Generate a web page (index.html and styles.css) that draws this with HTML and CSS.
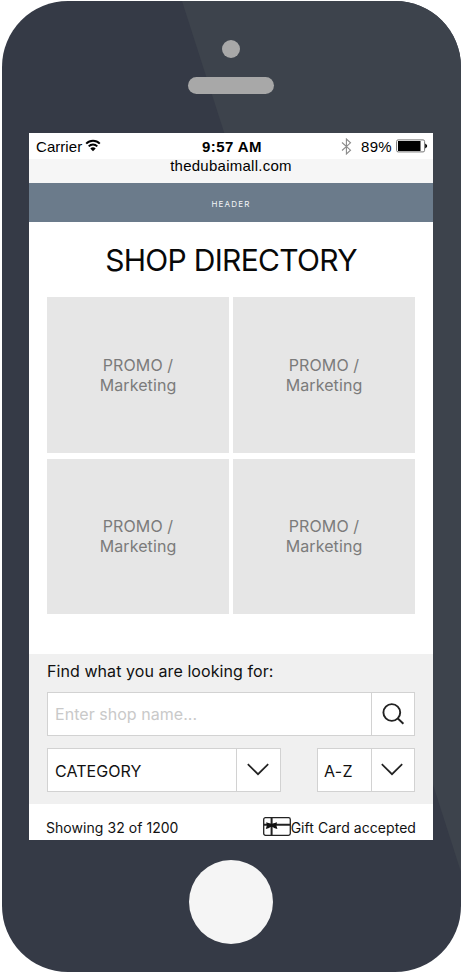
FILE: index.html
```html
<!DOCTYPE html>
<html lang="en">
<head>
<meta charset="utf-8">
<title>Shop Directory</title>
<link rel="stylesheet" href="styles.css">
</head>
<body>
<div class="phone">
  <div class="top">
    <span class="camera"></span>
    <span class="speaker"></span>
  </div>
  <main class="screen">
    <div class="status">
      <div class="carrier"><span class="carrier-name">Carrier</span>
        <svg width="16" height="13" viewBox="0 0 16 13" fill="none" stroke="#000" stroke-width="1.9"><path d="M1.2 4.7C5 .7 11 .7 14.8 4.7M3.7 7.4c2.5-2.6 6.1-2.6 8.6 0"/><path d="M8 12.2 5.3 9.4c1.5-1.5 3.9-1.5 5.4 0z" fill="#000" stroke="none"/></svg>
      </div>
      <span class="time">9:57 AM</span>
      <div class="power">
        <svg width="11" height="17" viewBox="0 0 11 17" fill="none" stroke="#8b8b8b" stroke-width="1.1"><path d="m1 4.5 8.5 7.7L5.4 16V1l4.1 3.8L1 12.5"/></svg>
        <span class="percent">89%</span>
        <svg width="32" height="14" viewBox="0 0 32 14"><rect x=".6" y=".9" width="28" height="12" rx="1.5" fill="#fff" stroke="#777" stroke-width="1"/><path d="M2 2h22.5v10H2z"/><path d="M29.2 4.4q4 2.5 0 5z"/></svg>
      </div>
    </div>
    <div class="url"><span>thedubaimall.com</span></div>
    <header class="header"><span>HEADER</span></header>
    <h1 class="title"><span>SHOP DIRECTORY</span></h1>
    <section class="promos">
      <div class="promo"><span class="p1">PROMO /</span><span class="p2">Marketing</span></div>
      <div class="promo"><span class="p1">PROMO /</span><span class="p2">Marketing</span></div>
      <div class="promo"><span class="p1">PROMO /</span><span class="p2">Marketing</span></div>
      <div class="promo"><span class="p1">PROMO /</span><span class="p2">Marketing</span></div>
    </section>
    <section class="finder">
      <div class="label"><span>Find what you are looking for:</span></div>
      <div class="field">
        <span class="value hint">Enter shop name...</span>
        <span class="action"><svg width="24" height="24" viewBox="0 0 24 24" fill="none" stroke="#222" stroke-width="1.9"><circle cx="10.8" cy="10.5" r="8.4"/><path d="m16.6 16.2 5.8 5.6"/></svg></span>
      </div>
      <div class="selects">
        <div class="field category">
          <span class="value">CATEGORY</span>
          <span class="action"><svg width="22" height="13" viewBox="0 0 22 13" fill="none" stroke="#222" stroke-width="1.7"><path d="m.8 1.2 10.2 10 10.2-10"/></svg></span>
        </div>
        <div class="field order">
          <span class="value">A-Z</span>
          <span class="action"><svg width="22" height="13" viewBox="0 0 22 13" fill="none" stroke="#222" stroke-width="1.7"><path d="m.8 1.2 10.2 10 10.2-10"/></svg></span>
        </div>
      </div>
    </section>
    <footer class="results">
      <span class="count">Showing 32 of 1200</span>
      <div class="gift">
        <svg width="28" height="19" viewBox="0 0 28 19" fill="none" stroke="#222"><rect x=".7" y=".7" width="26.6" height="17.6" rx="1.8" stroke-width="1.3"/><path d="M1 7.7h26" stroke-width="1.9"/><path d="M8.6 1v17" stroke-width="2"/><path d="m3.2 5.2 5.4 1.7L14 5.2l-.6 3.2 1 3.6-2.6-.7-3.2-1.8-3.2 1.8-2.6.7 1-3.6z" fill="#111" stroke="none"/></svg>
        <span class="accepted">Gift Card accepted</span>
      </div>
    </footer>
  </main>
  <div class="home"></div>
</div>
</body>
</html>
```

FILE: styles.css
```css
* { box-sizing: border-box; }
body { margin: 0; background: #fff; font-family: Inter, "Liberation Sans", sans-serif; color: #111; }
svg { display: block; flex: none; }
span { white-space: nowrap; }
.phone {
  width: 459px; height: 971px; margin: 1px 0 0 2px; padding: 0 27px;
  border-radius: 66px;
  background: #353a46;
  position: relative; overflow: hidden;
}
.phone::before {
  content: ""; position: absolute; inset: 0; background: #3d434c;
  clip-path: polygon(180px 0, 459px 0, 459px 871px);
}
.top { height: 132px; padding: 39px 1px 0 0; display: flex; flex-direction: column; align-items: center; gap: 19px; position: relative; }
.camera { width: 18px; height: 18px; border-radius: 50%; background: #a8a8a8; }
.speaker { width: 86px; height: 17px; border-radius: 9px; background: #a8a8a8; }
.screen { width: 404px; height: 707px; background: #fff; position: relative; display: flex; flex-direction: column; }
.status { height: 26px; padding: 0 5px 0 7px; display: grid; grid-template-columns: 1fr auto 1fr; align-items: center; font: 15px "Liberation Sans", Arial, sans-serif; color: #000; }
.carrier { display: flex; align-items: center; gap: 4px; }
.carrier svg { margin-top: -2px; margin-left: -1px; }
.carrier-name { letter-spacing: .05px; }
.time { font-weight: bold; letter-spacing: .45px; }
.power { display: flex; align-items: center; justify-content: flex-end; }
.percent { margin: 0 4px 0 9px; letter-spacing: .3px; }
.url { height: 24px; background: #f6f6f6; text-align: center; font: 15px/14px "Liberation Sans", Arial, sans-serif; letter-spacing: .26px; color: #000; }
.header { height: 39px; background: #6b7b8b; color: #f3f5f7; text-align: center; font-size: 8px; line-height: 42px; letter-spacing: 1.2px; }
.title { height: 75px; margin: 0; font-size: 30px; line-height: 76px; font-weight: 400; text-align: center; letter-spacing: -.7px; color: #080808; }
.promos { padding: 0 18px; display: grid; grid-template-columns: 182px 182px; grid-auto-rows: 155.5px; gap: 6px 4px; height: 357px; }
.promo { background: #e6e6e6; color: #7b7b7b; display: flex; flex-direction: column; align-items: center; justify-content: center; font-size: 16px; line-height: 20px; letter-spacing: .1px; }
.finder { height: 150px; padding: 0 18px; background: #f0f0f0; }
.label { height: 38px; font-size: 16px; line-height: 35px; letter-spacing: .07px; }
.field { height: 44px; display: flex; background: #fff; border: 1px solid #d2d2d2; }
.value { flex: 1; padding-left: 7px; line-height: 43px; font-size: 16px; }
.hint { color: #c9c9c9; letter-spacing: .04px; }
.action { width: 43px; border-left: 1px solid #d2d2d2; display: flex; align-items: center; justify-content: center; }
.action svg { margin: 0 1px 1px 0; }
.selects { display: flex; justify-content: space-between; margin-top: 12px; }
.category { width: 234px; }
.category .action { width: 44px; }
.order { width: 98px; }
.selects .value { padding-left: 7px; line-height: 45px; letter-spacing: .06px; }
.order .value { padding-left: 6px; letter-spacing: .3px; }
.selects svg { margin: 0 2px 1px 0; }
.results { height: 36px; padding: 13px 17px 0; display: flex; justify-content: space-between; align-items: flex-start; font-size: 14px; line-height: 22px; letter-spacing: .05px; }
.gift { display: flex; }
.home { width: 84px; height: 84px; margin: 20px auto 0; border-radius: 50%; background: #f5f5f5; position: relative; left: -1px; }
```
